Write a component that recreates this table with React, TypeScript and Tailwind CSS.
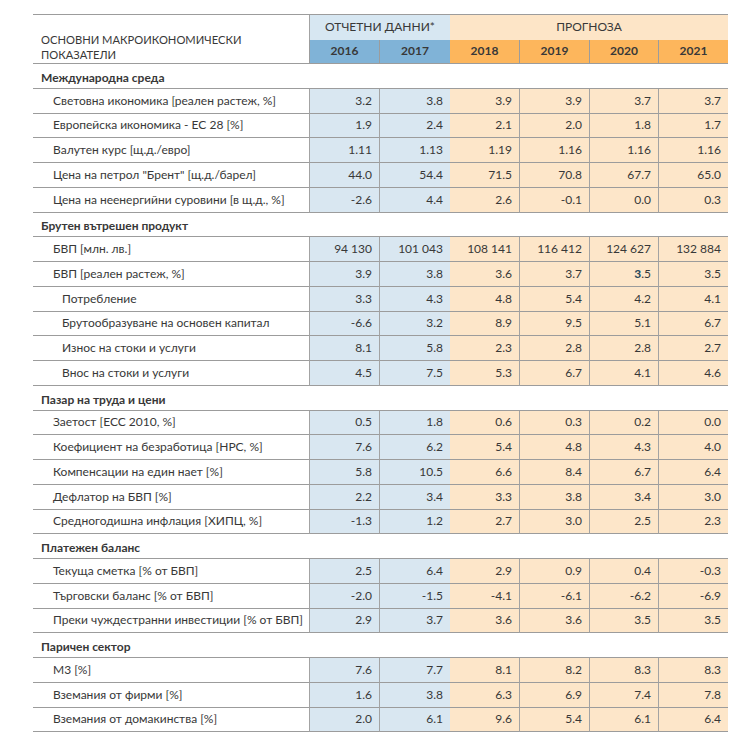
import React from "react";

type Row = { label: string; level: 1 | 2; values: React.ReactNode[] };
type Section = { title: string; rows: Row[] };

const sections: Section[] = [
  {
    title: "Международна среда",
    rows: [
      { label: "Световна икономика [реален растеж, %]", level: 1, values: ["3.2", "3.8", "3.9", "3.9", "3.7", "3.7"] },
      { label: "Европейска икономика - ЕС 28 [%]", level: 1, values: ["1.9", "2.4", "2.1", "2.0", "1.8", "1.7"] },
      { label: "Валутен курс [щ.д./евро]", level: 1, values: ["1.11", "1.13", "1.19", "1.16", "1.16", "1.16"] },
      { label: "Цена на петрол \"Брент\" [щ.д./барел]", level: 1, values: ["44.0", "54.4", "71.5", "70.8", "67.7", "65.0"] },
      { label: "Цена на неенергийни суровини [в щ.д., %]", level: 1, values: ["-2.6", "4.4", "2.6", "-0.1", "0.0", "0.3"] },
    ],
  },
  {
    title: "Брутен вътрешен продукт",
    rows: [
      { label: "БВП [млн. лв.]", level: 1, values: ["94 130", "101 043", "108 141", "116 412", "124 627", "132 884"] },
      {
        label: "БВП [реален растеж, %]",
        level: 1,
        values: [
          "3.9",
          "3.8",
          "3.6",
          "3.7",
          <>
            <span className="font-bold text-[#26485a]">3</span>.5
          </>,
          "3.5",
        ],
      },
      { label: "Потребление", level: 2, values: ["3.3", "4.3", "4.8", "5.4", "4.2", "4.1"] },
      { label: "Брутообразуване на основен капитал", level: 2, values: ["-6.6", "3.2", "8.9", "9.5", "5.1", "6.7"] },
      { label: "Износ на стоки и услуги", level: 2, values: ["8.1", "5.8", "2.3", "2.8", "2.8", "2.7"] },
      { label: "Внос на стоки и услуги", level: 2, values: ["4.5", "7.5", "5.3", "6.7", "4.1", "4.6"] },
    ],
  },
  {
    title: "Пазар на труда и цени",
    rows: [
      { label: "Заетост [ЕСС 2010, %]", level: 1, values: ["0.5", "1.8", "0.6", "0.3", "0.2", "0.0"] },
      { label: "Коефициент на безработица [НРС, %]", level: 1, values: ["7.6", "6.2", "5.4", "4.8", "4.3", "4.0"] },
      { label: "Компенсации на един нает [%]", level: 1, values: ["5.8", "10.5", "6.6", "8.4", "6.7", "6.4"] },
      { label: "Дефлатор на БВП [%]", level: 1, values: ["2.2", "3.4", "3.3", "3.8", "3.4", "3.0"] },
      { label: "Средногодишна инфлация [ХИПЦ, %]", level: 1, values: ["-1.3", "1.2", "2.7", "3.0", "2.5", "2.3"] },
    ],
  },
  {
    title: "Платежен баланс",
    rows: [
      { label: "Текуща сметка [% от БВП]", level: 1, values: ["2.5", "6.4", "2.9", "0.9", "0.4", "-0.3"] },
      { label: "Търговски баланс [% от БВП]", level: 1, values: ["-2.0", "-1.5", "-4.1", "-6.1", "-6.2", "-6.9"] },
      { label: "Преки чуждестранни инвестиции [% от БВП]", level: 1, values: ["2.9", "3.7", "3.6", "3.6", "3.5", "3.5"] },
    ],
  },
  {
    title: "Паричен сектор",
    rows: [
      { label: "М3 [%]", level: 1, values: ["7.6", "7.7", "8.1", "8.2", "8.3", "8.3"] },
      { label: "Вземания от фирми [%]", level: 1, values: ["1.6", "3.8", "6.3", "6.9", "7.4", "7.8"] },
      { label: "Вземания от домакинства [%]", level: 1, values: ["2.0", "6.1", "9.6", "5.4", "6.1", "6.4"] },
    ],
  },
];

const years = ["2016", "2017", "2018", "2019", "2020", "2021"];
const cols = "grid grid-cols-[276px_70px_71px_69px_70px_69px_70px]";

function valueCell(v: React.ReactNode, i: number) {
  const blue = i < 2;
  return (
    <div
      key={i}
      className={
        "flex items-center justify-end pr-[7px] border-b border-[#9c9c9c] " +
        (i !== 2 ? "border-l border-l-[#a3a3a3] " : "") +
        (blue ? "bg-[#d9e7f1]" : "bg-[#fde6c9]")
      }
    >
      {v}
    </div>
  );
}

export default function App() {
  return (
    <div
      className="bg-white min-h-[738px] pt-[14px] pl-[33px] text-[12px] text-[#383838]"
      style={{ fontFamily: "Lato, 'Open Sans', sans-serif" }}
    >
      <div className="w-[695px] border-t border-[#9c9c9c]">
        {/* header */}
        <div className={cols + " grid-rows-[24.5px_24.5px]"}>
          <div className="row-span-2 flex flex-col justify-end pl-[8px] pb-[1px] leading-[15px] text-[11.2px] border-b border-[#9c9c9c]">
            <span>ОСНОВНИ МАКРОИКОНОМИЧЕСКИ</span>
            <span>ПОКАЗАТЕЛИ</span>
          </div>
          <div className="col-span-2 flex items-center justify-center bg-[#d7e7f2] border-l border-[#a3a3a3]">
            ОТЧЕТНИ ДАННИ*
          </div>
          <div className="col-span-4 flex items-center justify-center bg-[#fde5c7]">ПРОГНОЗА</div>
          {years.map((y, i) => (
            <div
              key={y}
              className={
                "flex items-center justify-center font-bold border-b border-[#9c9c9c] " +
                (i !== 2 ? "border-l border-l-[#9c9c9c] " : "") +
                (i < 2 ? "bg-[#80b3d7]" : "bg-[#fdb65c]")
              }
            >
              {y}
            </div>
          ))}
        </div>

        {sections.map((s) => (
          <div key={s.title}>
            <div className="h-[24.75px] flex items-end pl-[8px] pb-[1px] font-bold border-b border-[#9c9c9c]">
              {s.title}
            </div>
            {s.rows.map((r) => (
              <div key={r.label} className={cols + " h-[24.75px]"}>
                <div
                  className={
                    "flex items-center border-b border-[#9c9c9c] " +
                    (r.level === 1 ? "pl-[20px]" : "pl-[29px]")
                  }
                >
                  {r.label}
                </div>
                {r.values.map(valueCell)}
              </div>
            ))}
          </div>
        ))}
      </div>
    </div>
  );
}
